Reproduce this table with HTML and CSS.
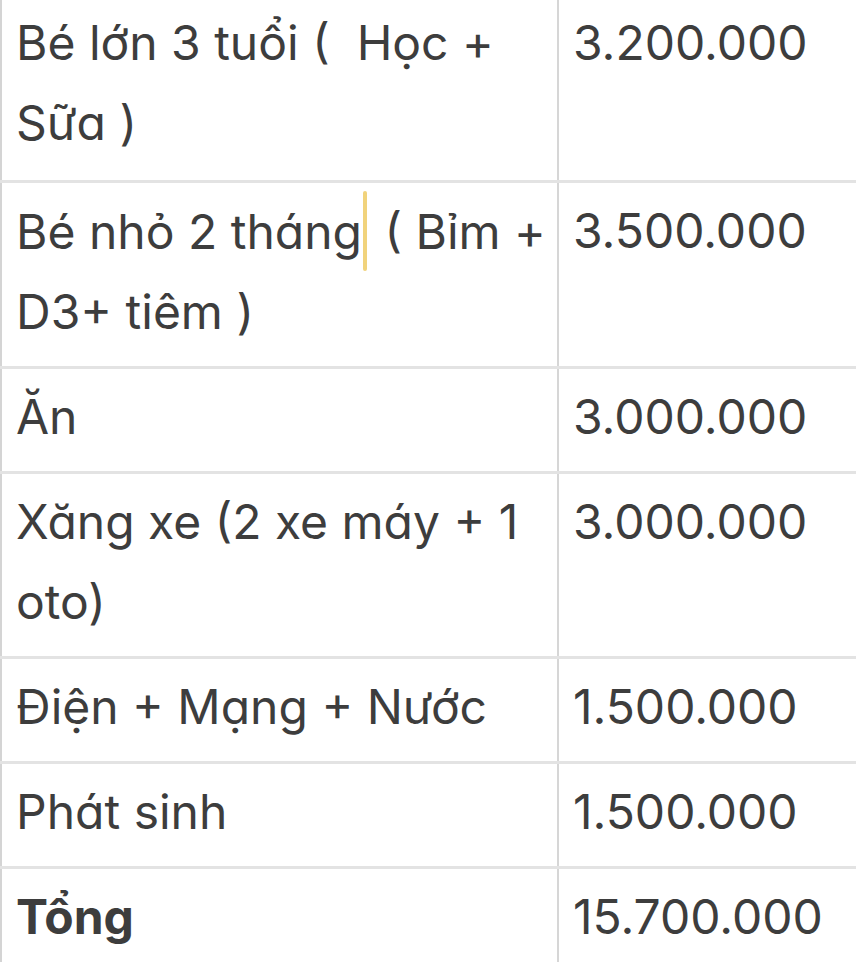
FILE: index.html
```html
<!DOCTYPE html>
<html lang="vi">
<head>
<meta charset="utf-8">
<title>Chi phí</title>
<link rel="stylesheet" href="styles.css">
</head>
<body>
<table class="budget">
  <tr class="row row-first">
    <td class="label">Bé lớn 3 tuổi (&nbsp; Học +<br>Sữa )</td>
    <td class="amount">3.200.000</td>
  </tr>
  <tr class="row">
    <td class="label">Bé nhỏ 2 tháng<span class="caret"></span> ( Bỉm +<br>D3+ tiêm )</td>
    <td class="amount">3.500.000</td>
  </tr>
  <tr class="row">
    <td class="label">Ăn</td>
    <td class="amount">3.000.000</td>
  </tr>
  <tr class="row">
    <td class="label">Xăng xe (2 xe máy + 1<br>oto)</td>
    <td class="amount">3.000.000</td>
  </tr>
  <tr class="row">
    <td class="label">Điện + Mạng + Nước</td>
    <td class="amount">1.500.000</td>
  </tr>
  <tr class="row">
    <td class="label">Phát sinh</td>
    <td class="amount">1.500.000</td>
  </tr>
  <tr class="row row-total">
    <td class="label total">Tổng</td>
    <td class="amount">15.700.000</td>
  </tr>
</table>
</body>
</html>
```
FILE: styles.css
```css
html, body {
  margin: 0;
  padding: 0;
  background: #ffffff;
  overflow: hidden;
}

.budget {
  border-collapse: collapse;
  table-layout: fixed;
  width: 900px;
  font-family: "Inter", "Liberation Sans", sans-serif;
  font-feature-settings: "cv11";
  font-size: 48px;
  line-height: 80px;
  color: #3d3d3d;
}

.budget td {
  vertical-align: top;
  white-space: nowrap;
  padding: 8px 0 14px 14px;
  border-bottom: 3px solid #e3e3e3;
}

.budget .label {
  width: 541px;
  border-left: 2px solid #d4d4d4;
  border-right: 2px solid #d6d6d6;
}

.budget .amount {
  padding-left: 14px;
}

.row-first td {
  padding-top: 3px;
  padding-bottom: 17px;
}

.row-total td {
  border-bottom: none;
}

.total {
  font-weight: 700;
}

.caret {
  display: inline-block;
  width: 4px;
  height: 80px;
  margin: 0 4px 0 1px;
  vertical-align: -22px;
  background: #f1d37c;
  border-radius: 2px;
}
```
